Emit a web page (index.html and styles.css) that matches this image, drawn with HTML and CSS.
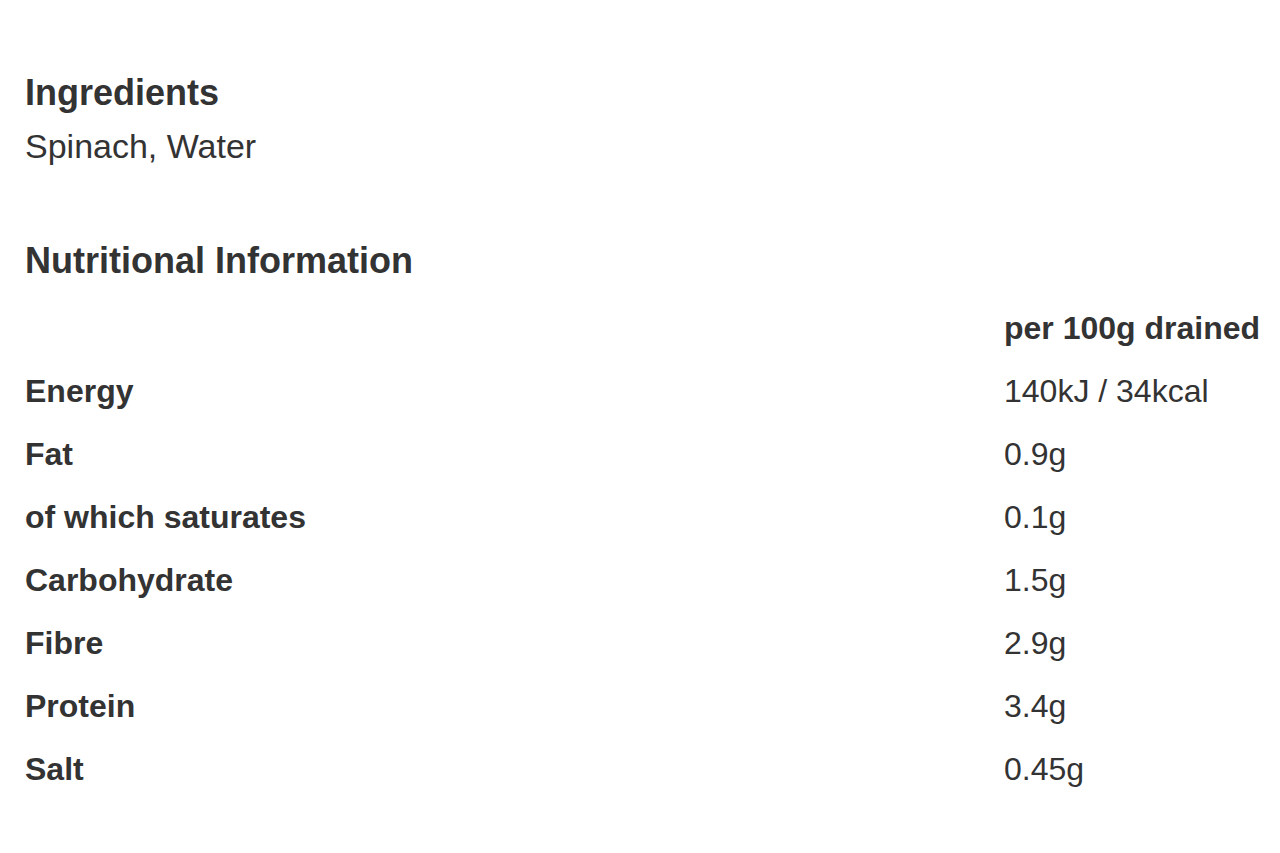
FILE: index.html
```html
<!DOCTYPE html>
<html lang="en">
<head>
<meta charset="utf-8">
<title>Product information</title>
<link rel="stylesheet" href="styles.css">
</head>
<body>
<main class="page">
  <section class="block">
    <h2 class="heading">Ingredients</h2>
    <p class="ingredients">Spinach, Water</p>
  </section>
  <section class="block nutrition">
    <h2 class="heading">Nutritional Information</h2>
    <div class="table">
      <div class="row head"><span class="label"></span><span class="value">per 100g drained</span></div>
      <div class="row"><span class="label">Energy</span><span class="value">140kJ / 34kcal</span></div>
      <div class="row"><span class="label">Fat</span><span class="value">0.9g</span></div>
      <div class="row"><span class="label">of which saturates</span><span class="value">0.1g</span></div>
      <div class="row"><span class="label">Carbohydrate</span><span class="value">1.5g</span></div>
      <div class="row"><span class="label">Fibre</span><span class="value">2.9g</span></div>
      <div class="row"><span class="label">Protein</span><span class="value">3.4g</span></div>
      <div class="row"><span class="label">Salt</span><span class="value">0.45g</span></div>
    </div>
  </section>
</main>
</body>
</html>
```
FILE: styles.css
```css
html, body {
  margin: 0;
  padding: 0;
  background: #ffffff;
}
body {
  font-family: "Liberation Sans", Arial, sans-serif;
  color: #333333;
}
.page {
  padding: 69px 0 0 25px;
}
.heading {
  margin: 0;
  font-size: 36px;
  line-height: 48px;
  font-weight: bold;
  color: #333333;
}
.ingredients {
  margin: 5px 0 0;
  font-size: 34px;
  line-height: 48px;
}
.nutrition {
  margin-top: 67px;
}
.table {
  display: flex;
  flex-direction: column;
  margin-top: 12px;
}
.row {
  display: grid;
  grid-template-columns: 979px auto;
  height: 63px;
  align-items: center;
  font-size: 32px;
}
.label {
  font-weight: bold;
}
.head .value {
  font-weight: bold;
}
```
